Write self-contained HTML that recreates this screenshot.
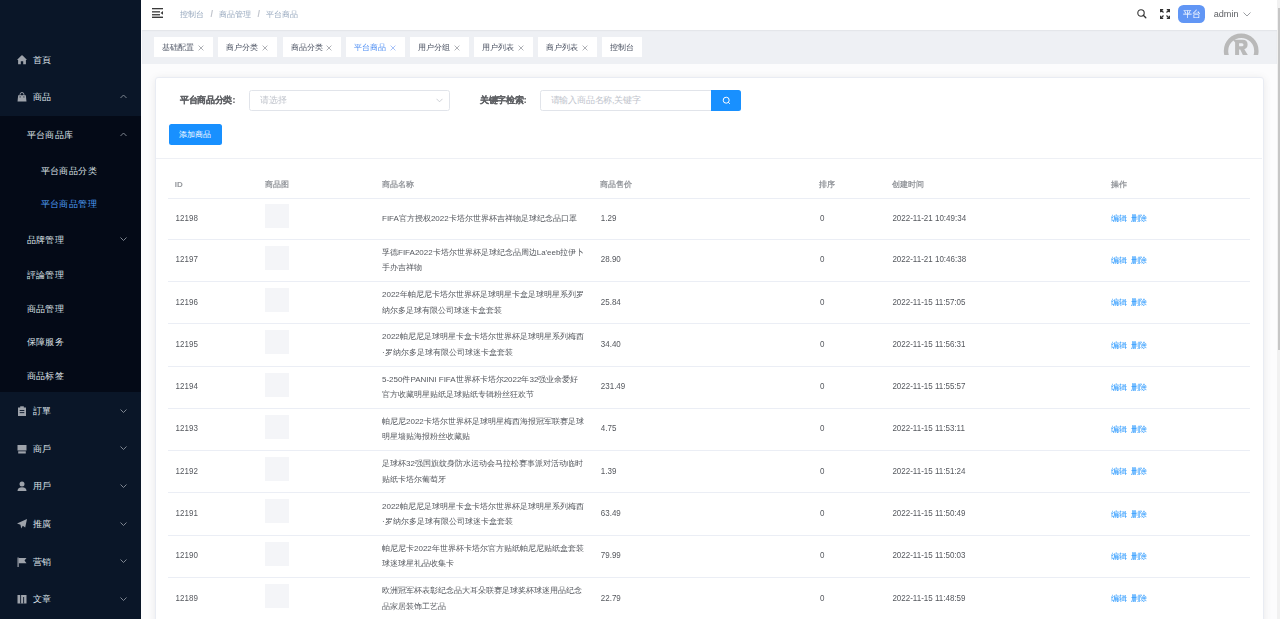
<!DOCTYPE html>
<html><head><meta charset="utf-8"><style>
*{box-sizing:border-box;margin:0;padding:0}
html,body{width:1280px;height:619px;overflow:hidden}
body{font-family:"Liberation Sans",sans-serif;background:#fcfcfd;position:relative;color:#606266}
.a{position:absolute}
#side{left:-5px;top:-5px;width:146px;height:630px;background:#0a1628}
.sub{position:absolute;left:0;width:141px;background:#040a17}
.mi{position:absolute;left:0;width:141px;color:#c9d1dc;font-size:9px;letter-spacing:0.4px;white-space:nowrap}
.mi .t{position:absolute;top:50%;margin-top:-6px;line-height:12px}
.mi svg{position:absolute}
#hdr{left:141px;top:-5px;width:1136px;height:35px;background:#fff}
#tabs{left:141.5px;top:30px;width:1135px;height:34px;background:#eef0f4;box-shadow:inset 0 1px 1.5px rgba(0,0,0,.05)}
.tab{position:absolute;top:37px;height:20px;background:#fff;font-size:8px;color:#495060;line-height:20px;white-space:nowrap}
.tab .tx{position:absolute;left:8px;top:0.5px}
#card{left:154.5px;top:76.8px;width:1109.2px;height:560px;background:#fff;border:1px solid #e9ecf3;border-radius:3px;box-shadow:0 1.3px 8px rgba(0,0,0,.08)}
.lbl{position:absolute;font-size:8.67px;letter-spacing:-0.35px;font-weight:bold;-webkit-text-stroke:0.2px #606266;color:#606266;white-space:nowrap;line-height:12px}
.inp{position:absolute;height:21px;border:1px solid #e1e4ea;border-radius:2.5px;background:#fff}
.ph{position:absolute;font-size:8.67px;letter-spacing:-0.2px;color:#c0c4cc;white-space:nowrap;line-height:12px}
#scroll{left:1277px;top:-5px;width:8px;height:630px;background:#f1f1f1}
#thumb{left:1278px;top:8px;width:7px;height:342px;background:#c6c6c6}
.hl{position:absolute;height:1px;background:#ebeef5}
.th{position:absolute;font-size:8px;color:#94979c;font-weight:bold;white-space:nowrap;line-height:12px}
.td{position:absolute;font-size:8px;color:#55585e;white-space:nowrap;line-height:12px;transform:scaleY(1.2);transform-origin:0 55%}
.nm{position:absolute;font-size:8px;color:#55585e;white-space:nowrap;line-height:15.4px}
.img{position:absolute;width:24px;height:24px;background:#f4f5f8}
.op{position:absolute;font-size:8px;color:#1890ff;white-space:nowrap;line-height:12px}
</style></head><body>
<div id="wrap" style="position:absolute;left:0;top:0;width:1280px;height:619px;filter:blur(0.3px)">
<div id="side" class="a"></div>
<div class="sub" style="top:115.80px;height:276.20px"></div>
<div class="mi" style="top:41.10px;height:37.60px;color:#dde2e8">
<svg style="left:17px;top:13.80px" width="10" height="10" viewBox="0 0 10 10"><path d="M5 0.3 Q5.3 0.3 5.6 0.6 L9.6 4.4 Q9.9 4.8 9.5 5 L8.9 5 L8.9 9.3 L6.2 9.3 L6.2 6.3 L3.8 6.3 L3.8 9.3 L1.1 9.3 L1.1 5 L0.5 5 Q0.1 4.8 0.4 4.4 L4.4 0.6 Q4.7 0.3 5 0.3 Z" fill="#9ea3ab"/></svg>
<span class="t" style="left:33px">首頁</span>
</div>
<div class="mi" style="top:78.70px;height:37.60px;color:#dde2e8">
<svg style="left:17px;top:13.80px" width="10" height="10" viewBox="0 0 10 10"><path d="M1.2 3.2 L8.8 3.2 L9.5 9.6 L0.5 9.6 Z" fill="#9ea3ab"/><path d="M3.1 4.3 L3.1 2.3 Q3.1 0.5 5 0.5 Q6.9 0.5 6.9 2.3 L6.9 4.3" fill="none" stroke="#9ea3ab" stroke-width="0.9"/><circle cx="3.1" cy="4.9" r="0.55" fill="#0a1628"/><circle cx="6.9" cy="4.9" r="0.55" fill="#0a1628"/></svg>
<span class="t" style="left:33px">商品</span>
<svg style="left:119.8px;top:15.40px" width="7" height="6" viewBox="0 0 7 6"><path d="M0.5 4 L3.5 1 L6.5 4" fill="none" stroke="#8b929c" stroke-width="0.9"/></svg>
</div>
<div class="mi" style="top:116.30px;height:37.60px;color:#dde2e8">
<span class="t" style="left:26.6px">平台商品库</span>
<svg style="left:119.8px;top:15.40px" width="7" height="6" viewBox="0 0 7 6"><path d="M0.5 4 L3.5 1 L6.5 4" fill="none" stroke="#8b929c" stroke-width="0.9"/></svg>
</div>
<div class="mi" style="top:153.90px;height:33.50px;color:#dde2e8">
<span class="t" style="left:40.7px">平台商品分类</span>
</div>
<div class="mi" style="top:187.40px;height:33.50px;color:#4d9ef6">
<span class="t" style="left:40.7px">平台商品管理</span>
</div>
<div class="mi" style="top:220.90px;height:37.60px;color:#dde2e8">
<span class="t" style="left:26.6px">品牌管理</span>
<svg style="left:119.8px;top:15.40px" width="7" height="6" viewBox="0 0 7 6"><path d="M0.5 1.5 L3.5 4.5 L6.5 1.5" fill="none" stroke="#8b929c" stroke-width="0.9"/></svg>
</div>
<div class="mi" style="top:258.50px;height:33.50px;color:#dde2e8">
<span class="t" style="left:26.6px">評論管理</span>
</div>
<div class="mi" style="top:292.00px;height:33.50px;color:#dde2e8">
<span class="t" style="left:26.6px">商品管理</span>
</div>
<div class="mi" style="top:325.50px;height:33.50px;color:#dde2e8">
<span class="t" style="left:26.6px">保障服务</span>
</div>
<div class="mi" style="top:359.00px;height:33.50px;color:#dde2e8">
<span class="t" style="left:26.6px">商品标签</span>
</div>
<div class="mi" style="top:392.50px;height:37.60px;color:#dde2e8">
<svg style="left:17px;top:13.80px" width="10" height="10" viewBox="0 0 10 10"><path d="M1 1.5 L9 1.5 L9 10 L1 10 Z" fill="#9ea3ab"/><rect x="3.2" y="0.3" width="3.6" height="2" fill="#9ea3ab"/><rect x="2.7" y="4" width="4.6" height="0.9" fill="#0a1628"/><rect x="2.7" y="6.2" width="4.6" height="0.9" fill="#0a1628"/></svg>
<span class="t" style="left:33px">訂單</span>
<svg style="left:119.8px;top:15.40px" width="7" height="6" viewBox="0 0 7 6"><path d="M0.5 1.5 L3.5 4.5 L6.5 1.5" fill="none" stroke="#8b929c" stroke-width="0.9"/></svg>
</div>
<div class="mi" style="top:430.10px;height:37.60px;color:#dde2e8">
<svg style="left:17px;top:13.80px" width="10" height="10" viewBox="0 0 10 10"><path d="M0.5 1 L9.5 1 L9.5 6.5 L0.5 6.5 Z" fill="#9ea3ab"/><path d="M1.2 7.3 L8.8 7.3 L8.8 9.5 L1.2 9.5 Z" fill="#9ea3ab"/></svg>
<span class="t" style="left:33px">商戶</span>
<svg style="left:119.8px;top:15.40px" width="7" height="6" viewBox="0 0 7 6"><path d="M0.5 1.5 L3.5 4.5 L6.5 1.5" fill="none" stroke="#8b929c" stroke-width="0.9"/></svg>
</div>
<div class="mi" style="top:467.70px;height:37.60px;color:#dde2e8">
<svg style="left:17px;top:13.80px" width="10" height="10" viewBox="0 0 10 10"><circle cx="5" cy="3" r="2.5" fill="#9ea3ab"/><path d="M0.5 10 Q0.5 6.2 5 6.2 Q9.5 6.2 9.5 10 Z" fill="#9ea3ab"/></svg>
<span class="t" style="left:33px">用戶</span>
<svg style="left:119.8px;top:15.40px" width="7" height="6" viewBox="0 0 7 6"><path d="M0.5 1.5 L3.5 4.5 L6.5 1.5" fill="none" stroke="#8b929c" stroke-width="0.9"/></svg>
</div>
<div class="mi" style="top:505.30px;height:37.60px;color:#dde2e8">
<svg style="left:17px;top:13.80px" width="10" height="10" viewBox="0 0 10 10"><path d="M10 0 L0 4.5 L3.5 5.8 L4.2 9.5 L5.8 6.8 L8.2 8.5 Z" fill="#9ea3ab"/></svg>
<span class="t" style="left:33px">推廣</span>
<svg style="left:119.8px;top:15.40px" width="7" height="6" viewBox="0 0 7 6"><path d="M0.5 1.5 L3.5 4.5 L6.5 1.5" fill="none" stroke="#8b929c" stroke-width="0.9"/></svg>
</div>
<div class="mi" style="top:542.90px;height:37.60px;color:#dde2e8">
<svg style="left:17px;top:13.80px" width="10" height="10" viewBox="0 0 10 10"><rect x="0.5" y="0.5" width="1.2" height="9.5" fill="#9ea3ab"/><path d="M1.7 1 L9.5 1 L7.5 3.6 L9.5 6.2 L1.7 6.2 Z" fill="#9ea3ab"/></svg>
<span class="t" style="left:33px">营销</span>
<svg style="left:119.8px;top:15.40px" width="7" height="6" viewBox="0 0 7 6"><path d="M0.5 1.5 L3.5 4.5 L6.5 1.5" fill="none" stroke="#8b929c" stroke-width="0.9"/></svg>
</div>
<div class="mi" style="top:580.50px;height:37.60px;color:#dde2e8">
<svg style="left:17px;top:13.80px" width="10" height="10" viewBox="0 0 10 10"><path d="M0.5 1 L9.5 1 L9.5 9.5 L0.5 9.5 Z" fill="#9ea3ab"/><rect x="3.2" y="1" width="0.9" height="8.5" fill="#0a1628"/><rect x="6.2" y="3" width="0.9" height="6.5" fill="#0a1628"/></svg>
<span class="t" style="left:33px">文章</span>
<svg style="left:119.8px;top:15.40px" width="7" height="6" viewBox="0 0 7 6"><path d="M0.5 1.5 L3.5 4.5 L6.5 1.5" fill="none" stroke="#8b929c" stroke-width="0.9"/></svg>
</div>
<div id="hdr" class="a"></div>
<svg class="a" style="left:152px;top:7.8px" width="11.2" height="10" viewBox="0 0 11.2 10"><rect x="0" y="0" width="11.2" height="1.3" fill="#3a3a3a"/><rect x="0" y="3.2" width="8" height="1.3" fill="#3a3a3a"/><rect x="0" y="6.1" width="8" height="1.3" fill="#3a3a3a"/><rect x="0" y="8.6" width="11.2" height="1.4" fill="#3a3a3a"/><path d="M11.2 2.9 L8.6 4.9 L11.2 6.9 Z" fill="#3a3a3a"/></svg>
<div class="a" style="left:180px;top:8px;font-size:8px;line-height:12px;color:#97a8be;white-space:nowrap">控制台<span style="margin:0 6px 0 6.5px;color:#c0c4cc;font-weight:bold;font-size:9px">/</span>商品管理<span style="margin:0 6px 0 6.5px;color:#c0c4cc;font-weight:bold;font-size:9px">/</span>平台商品</div>
<svg class="a" style="left:1137px;top:9px" width="10" height="10" viewBox="0 0 10 10"><circle cx="4" cy="4" r="3.2" fill="none" stroke="#333" stroke-width="1.1"/><path d="M6.3 6.3 L8.8 8.8" stroke="#333" stroke-width="1.3" stroke-linecap="round"/></svg>
<svg class="a" style="left:1160px;top:9px" width="10" height="10" viewBox="0 0 10 10" fill="none" stroke="#333" stroke-width="1.2"><path d="M0.6 3.2 V0.6 H3.2 M0.6 0.6 L3.5 3.5"/><path d="M9.4 3.2 V0.6 H6.8 M9.4 0.6 L6.5 3.5"/><path d="M0.6 6.8 V9.4 H3.2 M0.6 9.4 L3.5 6.5"/><path d="M9.4 6.8 V9.4 H6.8 M9.4 9.4 L6.5 6.5"/></svg>
<div class="a" style="left:1178.2px;top:5.1px;width:26.5px;height:17.5px;border-radius:5.5px;background:#6196f5"></div>
<div class="a" style="left:1183.4px;top:7.6px;font-size:8.6px;line-height:12px;color:#fff;white-space:nowrap">平台</div>
<div class="a" style="left:1213.7px;top:8px;font-size:9.15px;line-height:12px;color:#606266">admin</div>
<svg class="a" style="left:1242.8px;top:12px" width="8" height="5" viewBox="0 0 8 5"><path d="M0.5 0.5 L4 4 L7.5 0.5" fill="none" stroke="#909399" stroke-width="0.9"/></svg>
<div id="tabs" class="a"></div>
<div class="tab" style="left:154.2px;width:58.6px;color:#495060"><span class="tx">基础配置</span>
<svg class="a" style="left:43.6px;top:7.5px" width="6" height="6" viewBox="0 0 6 6"><path d="M0.6 0.6 L5.4 5.4 M5.4 0.6 L0.6 5.4" stroke="#8c8f96" stroke-width="0.7"/></svg>
</div>
<div class="tab" style="left:218px;width:59px;color:#495060"><span class="tx">商户分类</span>
<svg class="a" style="left:44px;top:7.5px" width="6" height="6" viewBox="0 0 6 6"><path d="M0.6 0.6 L5.4 5.4 M5.4 0.6 L0.6 5.4" stroke="#8c8f96" stroke-width="0.7"/></svg>
</div>
<div class="tab" style="left:282.5px;width:58.5px;color:#495060"><span class="tx">商品分类</span>
<svg class="a" style="left:43.5px;top:7.5px" width="6" height="6" viewBox="0 0 6 6"><path d="M0.6 0.6 L5.4 5.4 M5.4 0.6 L0.6 5.4" stroke="#8c8f96" stroke-width="0.7"/></svg>
</div>
<div class="tab" style="left:346px;width:59px;color:#4a8cf3"><span class="tx">平台商品</span>
<svg class="a" style="left:44px;top:7.5px" width="6" height="6" viewBox="0 0 6 6"><path d="M0.6 0.6 L5.4 5.4 M5.4 0.6 L0.6 5.4" stroke="#7fa6f3" stroke-width="0.7"/></svg>
</div>
<div class="tab" style="left:410px;width:59px;color:#495060"><span class="tx">用户分组</span>
<svg class="a" style="left:44px;top:7.5px" width="6" height="6" viewBox="0 0 6 6"><path d="M0.6 0.6 L5.4 5.4 M5.4 0.6 L0.6 5.4" stroke="#8c8f96" stroke-width="0.7"/></svg>
</div>
<div class="tab" style="left:474px;width:58.5px;color:#495060"><span class="tx">用户列表</span>
<svg class="a" style="left:43.5px;top:7.5px" width="6" height="6" viewBox="0 0 6 6"><path d="M0.6 0.6 L5.4 5.4 M5.4 0.6 L0.6 5.4" stroke="#8c8f96" stroke-width="0.7"/></svg>
</div>
<div class="tab" style="left:538px;width:58.6px;color:#495060"><span class="tx">商户列表</span>
<svg class="a" style="left:43.6px;top:7.5px" width="6" height="6" viewBox="0 0 6 6"><path d="M0.6 0.6 L5.4 5.4 M5.4 0.6 L0.6 5.4" stroke="#8c8f96" stroke-width="0.7"/></svg>
</div>
<div class="tab" style="left:602px;width:40px;color:#495060"><span class="tx">控制台</span>
</div>
<svg class="a" style="left:1223px;top:32.5px" width="37" height="22.3" viewBox="0 0 37 22.3"><circle cx="18.2" cy="17.9" r="15.2" fill="none" stroke="#b9b9b9" stroke-width="4.4"/><path d="M10 6.7 L19.8 6.7 Q24.6 6.7 24.6 11.6 Q24.6 15.3 21.3 16.3 L25 22.3 L20 22.3 L17.2 16.6 L16.1 16.6 L16.1 22.3 L12.1 22.3 L12.1 9.6 Z M16.1 10.2 L16.1 13.3 L19 13.3 Q20.5 13.3 20.5 11.75 Q20.5 10.2 19 10.2 Z" fill="#b9b9b9" fill-rule="evenodd"/></svg>
<div id="card" class="a"></div>
<div class="lbl" style="left:180px;top:93.6px">平台商品分类<span style="margin-left:0.5px">:</span></div>
<div class="inp" style="left:249.3px;top:90px;width:201.2px"></div>
<div class="ph" style="left:260px;top:94.2px">请选择</div>
<svg class="a" style="left:435.5px;top:98px" width="7" height="5" viewBox="0 0 7 5"><path d="M0.5 0.8 L3.5 3.8 L6.5 0.8" fill="none" stroke="#c0c4cc" stroke-width="0.8"/></svg>
<div class="lbl" style="left:480px;top:93.6px">关键字检索<span style="margin-left:0.5px">:</span></div>
<div class="inp" style="left:540px;top:90px;width:173px;border-radius:2.5px 0 0 2.5px"></div>
<div class="ph" style="left:550.5px;top:94.2px">请输入商品名称,关键字</div>
<div class="a" style="left:711.3px;top:90px;width:30px;height:21.3px;background:#1890ff;border-radius:0 2.5px 2.5px 0"></div>
<svg class="a" style="left:722px;top:96px" width="9" height="9" viewBox="0 0 9 9"><circle cx="4.2" cy="4.2" r="3" fill="none" stroke="#fff" stroke-width="1"/><path d="M6.3 6.3 L7.8 7.8" stroke="#fff" stroke-width="1"/></svg>
<div class="a" style="left:168.7px;top:124px;width:53.3px;height:21.3px;background:#1890ff;border-radius:2.5px;color:#fff;font-size:8px;line-height:21.3px;text-align:center">添加商品</div>
<div class="hl" style="left:155.7px;top:157.5px;width:1106px;background:#eef0f5"></div>
<div class="th" style="left:174.80px;top:178.7px">ID</div>
<div class="th" style="left:265.00px;top:178.7px">商品图</div>
<div class="th" style="left:382.00px;top:178.7px">商品名称</div>
<div class="th" style="left:600.00px;top:178.7px">商品售价</div>
<div class="th" style="left:819.40px;top:178.7px">排序</div>
<div class="th" style="left:891.70px;top:178.7px">创建时间</div>
<div class="th" style="left:1110.70px;top:178.7px">操作</div>
<div class="hl" style="left:168.1px;top:197.8px;width:1081.7px"></div>
<div class="td" style="left:175.60px;top:212.70px">12198</div>
<div class="img" style="left:265px;top:204.10px"></div>
<div class="nm" style="left:382.00px;top:211.00px">FIFA官方授权2022卡塔尔世界杯吉祥物足球纪念品口罩</div>
<div class="td" style="left:600.80px;top:212.70px">1.29</div>
<div class="td" style="left:819.90px;top:212.70px">0</div>
<div class="td" style="left:892.40px;top:212.70px">2022-11-21 10:49:34</div>
<div class="op" style="left:1111.30px;top:213.40px">编辑<span style="margin-left:4px">删除</span></div>
<div class="hl" style="left:168.1px;top:238.60px;width:1081.7px"></div>
<div class="td" style="left:175.60px;top:254.25px">12197</div>
<div class="img" style="left:265px;top:245.65px"></div>
<div class="nm" style="left:382.00px;top:244.85px">孚德FIFA2022卡塔尔世界杯足球纪念品周边La'eeb拉伊卜<br>手办吉祥物</div>
<div class="td" style="left:600.80px;top:254.25px">28.90</div>
<div class="td" style="left:819.90px;top:254.25px">0</div>
<div class="td" style="left:892.40px;top:254.25px">2022-11-21 10:46:38</div>
<div class="op" style="left:1111.30px;top:254.95px">编辑<span style="margin-left:4px">删除</span></div>
<div class="hl" style="left:168.1px;top:280.90px;width:1081.7px"></div>
<div class="td" style="left:175.60px;top:296.55px">12196</div>
<div class="img" style="left:265px;top:287.95px"></div>
<div class="nm" style="left:382.00px;top:287.15px">2022年帕尼尼卡塔尔世界杯足球明星卡盒足球明星系列罗<br>纳尔多足球有限公司球迷卡盒套装</div>
<div class="td" style="left:600.80px;top:296.55px">25.84</div>
<div class="td" style="left:819.90px;top:296.55px">0</div>
<div class="td" style="left:892.40px;top:296.55px">2022-11-15 11:57:05</div>
<div class="op" style="left:1111.30px;top:297.25px">编辑<span style="margin-left:4px">删除</span></div>
<div class="hl" style="left:168.1px;top:323.20px;width:1081.7px"></div>
<div class="td" style="left:175.60px;top:338.85px">12195</div>
<div class="img" style="left:265px;top:330.25px"></div>
<div class="nm" style="left:382.00px;top:329.45px">2022帕尼尼足球明星卡盒卡塔尔世界杯足球明星系列梅西<br>·罗纳尔多足球有限公司球迷卡盒套装</div>
<div class="td" style="left:600.80px;top:338.85px">34.40</div>
<div class="td" style="left:819.90px;top:338.85px">0</div>
<div class="td" style="left:892.40px;top:338.85px">2022-11-15 11:56:31</div>
<div class="op" style="left:1111.30px;top:339.55px">编辑<span style="margin-left:4px">删除</span></div>
<div class="hl" style="left:168.1px;top:365.50px;width:1081.7px"></div>
<div class="td" style="left:175.60px;top:381.15px">12194</div>
<div class="img" style="left:265px;top:372.55px"></div>
<div class="nm" style="left:382.00px;top:371.75px">5-250件PANINI FIFA世界杯卡塔尔2022年32强业余爱好<br>官方收藏明星贴纸足球贴纸专辑粉丝狂欢节</div>
<div class="td" style="left:600.80px;top:381.15px">231.49</div>
<div class="td" style="left:819.90px;top:381.15px">0</div>
<div class="td" style="left:892.40px;top:381.15px">2022-11-15 11:55:57</div>
<div class="op" style="left:1111.30px;top:381.85px">编辑<span style="margin-left:4px">删除</span></div>
<div class="hl" style="left:168.1px;top:407.80px;width:1081.7px"></div>
<div class="td" style="left:175.60px;top:423.45px">12193</div>
<div class="img" style="left:265px;top:414.85px"></div>
<div class="nm" style="left:382.00px;top:414.05px">帕尼尼2022卡塔尔世界杯足球明星梅西海报冠军联赛足球<br>明星墙贴海报粉丝收藏贴</div>
<div class="td" style="left:600.80px;top:423.45px">4.75</div>
<div class="td" style="left:819.90px;top:423.45px">0</div>
<div class="td" style="left:892.40px;top:423.45px">2022-11-15 11:53:11</div>
<div class="op" style="left:1111.30px;top:424.15px">编辑<span style="margin-left:4px">删除</span></div>
<div class="hl" style="left:168.1px;top:450.10px;width:1081.7px"></div>
<div class="td" style="left:175.60px;top:465.75px">12192</div>
<div class="img" style="left:265px;top:457.15px"></div>
<div class="nm" style="left:382.00px;top:456.35px">足球杯32强国旗纹身防水运动会马拉松赛事派对活动临时<br>贴纸卡塔尔葡萄牙</div>
<div class="td" style="left:600.80px;top:465.75px">1.39</div>
<div class="td" style="left:819.90px;top:465.75px">0</div>
<div class="td" style="left:892.40px;top:465.75px">2022-11-15 11:51:24</div>
<div class="op" style="left:1111.30px;top:466.45px">编辑<span style="margin-left:4px">删除</span></div>
<div class="hl" style="left:168.1px;top:492.40px;width:1081.7px"></div>
<div class="td" style="left:175.60px;top:508.05px">12191</div>
<div class="img" style="left:265px;top:499.45px"></div>
<div class="nm" style="left:382.00px;top:498.65px">2022帕尼尼足球明星卡盒卡塔尔世界杯足球明星系列梅西<br>·罗纳尔多足球有限公司球迷卡盒套装</div>
<div class="td" style="left:600.80px;top:508.05px">63.49</div>
<div class="td" style="left:819.90px;top:508.05px">0</div>
<div class="td" style="left:892.40px;top:508.05px">2022-11-15 11:50:49</div>
<div class="op" style="left:1111.30px;top:508.75px">编辑<span style="margin-left:4px">删除</span></div>
<div class="hl" style="left:168.1px;top:534.70px;width:1081.7px"></div>
<div class="td" style="left:175.60px;top:550.35px">12190</div>
<div class="img" style="left:265px;top:541.75px"></div>
<div class="nm" style="left:382.00px;top:540.95px">帕尼尼卡2022年世界杯卡塔尔官方贴纸帕尼尼贴纸盒套装<br>球迷球星礼品收集卡</div>
<div class="td" style="left:600.80px;top:550.35px">79.99</div>
<div class="td" style="left:819.90px;top:550.35px">0</div>
<div class="td" style="left:892.40px;top:550.35px">2022-11-15 11:50:03</div>
<div class="op" style="left:1111.30px;top:551.05px">编辑<span style="margin-left:4px">删除</span></div>
<div class="hl" style="left:168.1px;top:577.00px;width:1081.7px"></div>
<div class="td" style="left:175.60px;top:592.65px">12189</div>
<div class="img" style="left:265px;top:584.05px"></div>
<div class="nm" style="left:382.00px;top:583.25px">欧洲冠军杯表彰纪念品大耳朵联赛足球奖杯球迷用品纪念<br>品家居装饰工艺品</div>
<div class="td" style="left:600.80px;top:592.65px">22.79</div>
<div class="td" style="left:819.90px;top:592.65px">0</div>
<div class="td" style="left:892.40px;top:592.65px">2022-11-15 11:48:59</div>
<div class="op" style="left:1111.30px;top:593.35px">编辑<span style="margin-left:4px">删除</span></div>
<div class="hl" style="left:168.1px;top:619.30px;width:1081.7px"></div>
<div id="scroll" class="a"></div>
<div id="thumb" class="a"></div>
</div>
</body></html>
